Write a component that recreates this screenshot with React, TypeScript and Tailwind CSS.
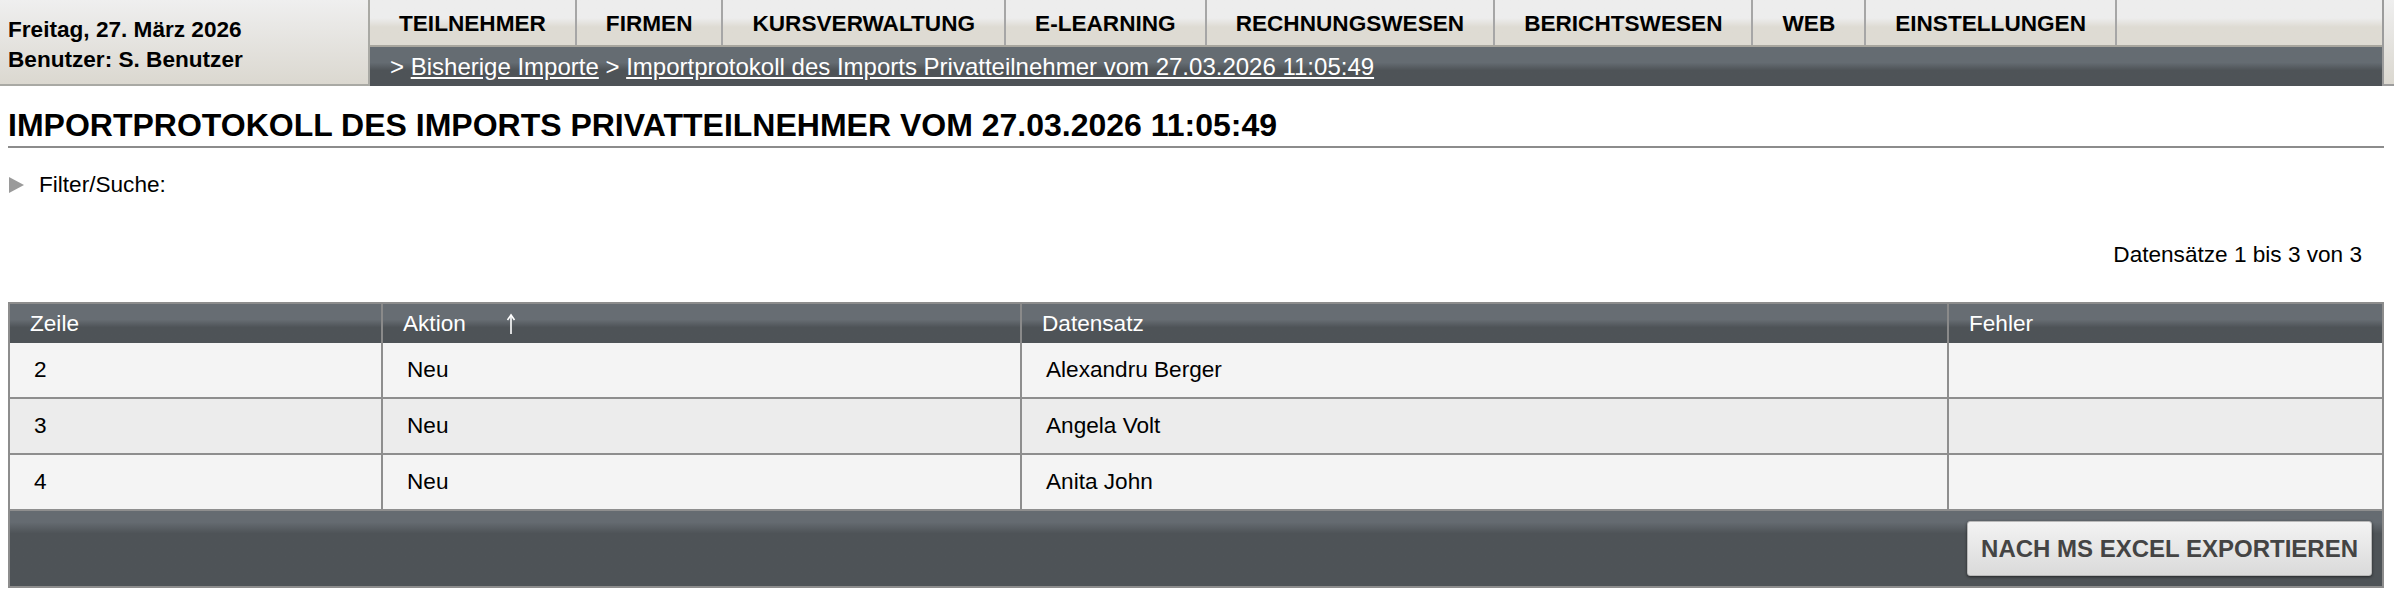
const tabs = [
  "TEILNEHMER",
  "FIRMEN",
  "KURSVERWALTUNG",
  "E-LEARNING",
  "RECHNUNGSWESEN",
  "BERICHTSWESEN",
  "WEB",
  "EINSTELLUNGEN",
]

const rows = [
  { zeile: "2", aktion: "Neu", datensatz: "Alexandru Berger", fehler: "" },
  { zeile: "3", aktion: "Neu", datensatz: "Angela Volt", fehler: "" },
  { zeile: "4", aktion: "Neu", datensatz: "Anita John", fehler: "" },
]

function SortArrow() {
  return (
    <svg width="10" height="22" viewBox="0 0 10 22" className="ml-[40px]">
      <path d="M5 2 L5 21" stroke="#fff" strokeWidth="1.6" fill="none" />
      <path d="M1.5 7 L5 2 L8.5 7" stroke="#fff" strokeWidth="1.6" fill="none" />
    </svg>
  )
}

export default function App() {
  return (
    <div className="w-[2394px] h-[598px] overflow-hidden bg-white font-['Liberation_Sans',Arial,sans-serif] text-[22.6px] text-black">
      <header className="flex h-[86px]">
        <div className="w-[370px] shrink-0 flex flex-col pl-[8px] pt-[15px] font-bold leading-[30px] bg-linear-to-b from-[#efefef] to-[#dbd8d0] border-r-2 border-b-2 border-[#a9a9a4]">
          <span>Freitag, 27. März 2026</span>
          <span>Benutzer: S. Benutzer</span>
        </div>

        <div className="flex-1 flex flex-col">
          <nav className="flex h-[47px] border-b-2 border-[#a8a69e] bg-linear-to-b from-[#ededed] from-40% to-[#dedbd3] to-60%">
            {tabs.map((tab) => (
              <a
                key={tab}
                href="#"
                className="flex items-center pt-[2px] px-[29px] font-bold border-r-2 border-[#a6a6a6]"
              >
                {tab}
              </a>
            ))}
          </nav>
          <div className="flex-1 flex items-center pl-[20px] text-[24px] text-white bg-linear-to-b from-[#656c72] from-40% to-[#4e5357] to-60%">
            <span>&gt;&nbsp;</span>
            <a href="#" className="underline">Bisherige Importe</a>
            <span>&nbsp;&gt;&nbsp;</span>
            <a href="#" className="underline">
              Importprotokoll des Imports Privatteilnehmer vom 27.03.2026 11:05:49
            </a>
          </div>
        </div>

        <div className="w-[12px] shrink-0 border-l-2 border-b-2 border-[#9c9c9c] bg-linear-to-b from-[#efefef] to-[#dbd8d0]" />
      </header>

      <main className="pl-[8px] pr-[10px]">
        <h1 className="mt-[20px] pb-[2px] text-[32px] leading-[38px] font-bold border-b-2 border-[#8c8c8c]">
          IMPORTPROTOKOLL DES IMPORTS PRIVATTEILNEHMER VOM 27.03.2026 11:05:49
        </h1>

        <div className="mt-[24px] h-[26px] flex items-center">
          <svg width="15" height="16" viewBox="0 0 15 16" className="ml-[1px]">
            <path d="M0 0 L15 8 L0 16 Z" fill="#9a9a9a" />
          </svg>
          <span className="ml-[15px] leading-[26px]">Filter/Suche:</span>
        </div>

        <div className="mt-[44px] pr-[22px] text-right leading-[26px]">Datensätze 1 bis 3 von 3</div>

        <div className="mt-[34px] border-2 border-[#8d8d8d]">
          <div className="grid grid-cols-[373px_639px_927px_433px] h-[39px] text-white bg-linear-to-b from-[#676d73] from-40% to-[#4e5357] to-60%">
            <div className="flex items-center pl-[20px] border-r-2 border-[#8a8a8a]">Zeile</div>
            <div className="flex items-center pl-[20px] border-r-2 border-[#8a8a8a]">
              Aktion
              <SortArrow />
            </div>
            <div className="flex items-center pl-[20px] border-r-2 border-[#8a8a8a]">Datensatz</div>
            <div className="flex items-center pl-[20px]">Fehler</div>
          </div>

          {rows.map((row, i) => (
            <div
              key={row.zeile}
              className={`grid grid-cols-[373px_639px_927px_433px] h-[56px] border-b-2 border-[#8e8e8e] ${
                i % 2 === 1 ? "bg-[#ececec]" : "bg-[#f4f4f4]"
              }`}
            >
              <div className="flex items-center pl-[24px] border-r-2 border-[#8e8e8e]">{row.zeile}</div>
              <div className="flex items-center pl-[24px] border-r-2 border-[#8e8e8e]">{row.aktion}</div>
              <div className="flex items-center pl-[24px] border-r-2 border-[#8e8e8e]">{row.datensatz}</div>
              <div className="flex items-center pl-[24px]">{row.fehler}</div>
            </div>
          ))}

          <div className="h-[75px] flex justify-end items-start pt-[10px] pr-[10px] bg-linear-to-b from-[#656b71] from-15% to-[#4e5357] to-30%">
            <button className="h-[55px] px-[13px] rounded-[3px] border border-[#b8b8b8] bg-linear-to-b from-[#f3f3f3] to-[#dadada] text-[#444] text-[24px] font-bold shadow-[0_1px_3px_rgba(0,0,0,0.55)]">
              NACH MS EXCEL EXPORTIEREN
            </button>
          </div>
        </div>
      </main>
    </div>
  )
}
